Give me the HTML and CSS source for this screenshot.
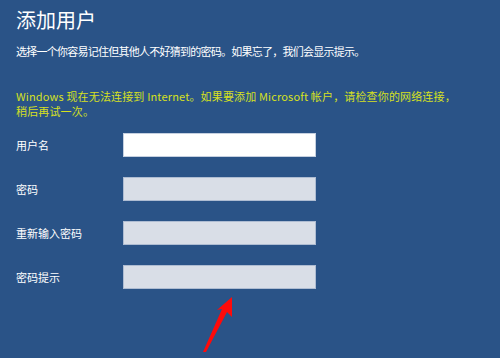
FILE: index.html
```html
<!DOCTYPE html>
<html lang="zh-CN">
<head>
<meta charset="utf-8">
<link rel="stylesheet" href="styles.css">
</head>
<body>
<main class="page">
  <h1 class="title">添加用户</h1>
  <p class="subtitle">选择一个你容易记住但其他人不好猜到的密码。如果忘了，我们会显示提示。</p>
  <p class="warning">Windows 现在无法连接到 Internet。如果要添加 Microsoft 帐户，请检查你的网络连接，<br>稍后再试一次。</p>
  <div class="form">
    <label class="label">用户名</label>
    <div class="field field-active"></div>
    <label class="label">密码</label>
    <div class="field"></div>
    <label class="label">重新输入密码</label>
    <div class="field"></div>
    <label class="label">密码提示</label>
    <div class="field"></div>
  </div>
</main>
<svg class="arrow" width="500" height="358" viewBox="0 0 500 358">
  <polygon points="203,352 222,309 217,310 232,297 232,317 227,312 206,352" fill="#ff0a0a"/>
</svg>
</body>
</html>
```
FILE: styles.css
```css
html, body {
  margin: 0;
  padding: 0;
}
body {
  width: 500px;
  height: 358px;
  background: #2a5387;
  overflow: hidden;
  position: relative;
  font-family: "Noto Sans CJK SC", "Noto Sans", sans-serif;
  color: #ffffff;
}
.page {
  padding: 8px 0 0 16px;
}
.title {
  margin: 0;
  font-size: 20px;
  line-height: 24px;
  font-weight: 400;
}
.subtitle {
  margin: 11px 0 0;
  font-size: 11px;
  line-height: 16px;
  letter-spacing: -0.75px;
}
.warning {
  margin: 30px 0 0;
  font-size: 11px;
  line-height: 15px;
  letter-spacing: 0.15px;
  color: #d6e01e;
}
.form {
  margin-top: 14px;
  display: grid;
  grid-template-columns: 107px 193px;
  grid-auto-rows: 24px;
  row-gap: 20px;
  align-items: center;
}
.label {
  font-size: 11px;
  line-height: 16px;
}
.field {
  height: 24px;
  box-sizing: border-box;
  background: #d9dee7;
  border: 1px solid #aebcd2;
}
.field-active {
  background: #ffffff;
  border-color: #c5d0e0;
}
.arrow {
  position: absolute;
  left: 0;
  top: 0;
}
```
